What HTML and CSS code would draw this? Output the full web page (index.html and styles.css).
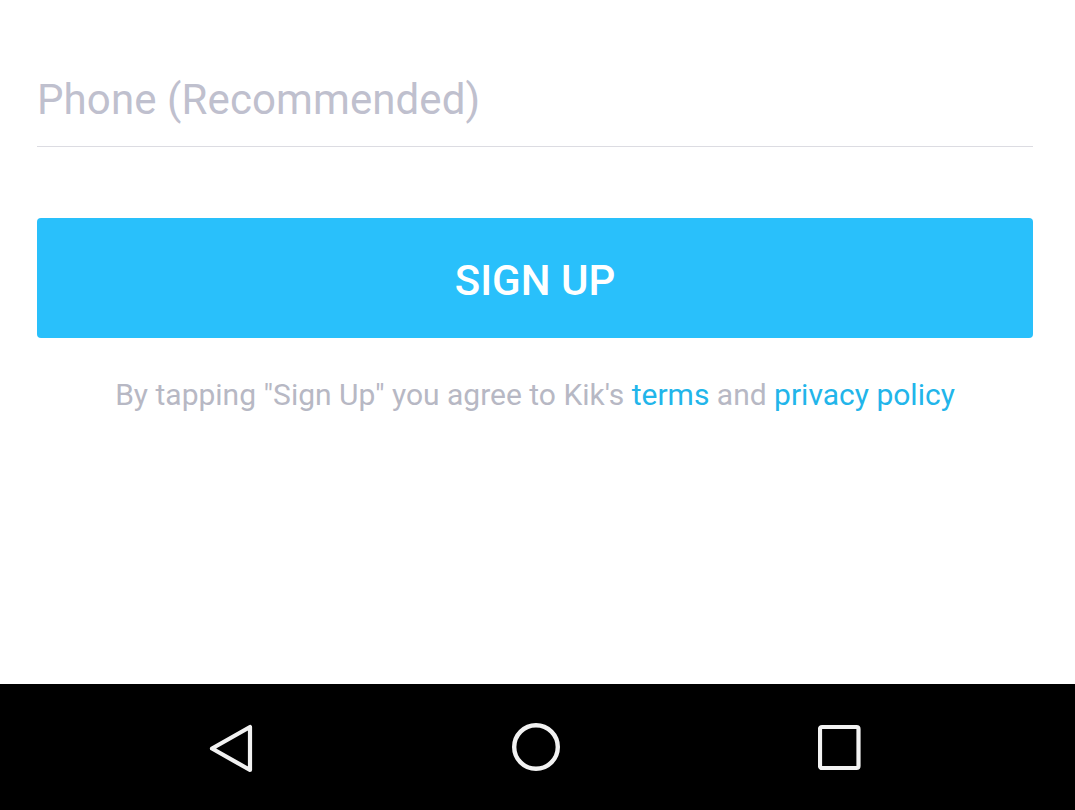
FILE: index.html
```html
<!DOCTYPE html>
<html>
<head>
<meta charset="utf-8">
<link rel="stylesheet" href="styles.css">
</head>
<body>
<div class="screen">
  <main class="content">
    <div class="field">
      <span class="placeholder">Phone (Recommended)</span>
    </div>
    <button class="signup">SIGN UP</button>
    <p class="legal">By tapping "Sign Up" you agree to Kik's <span class="link">terms</span> and <span class="link">privacy policy</span></p>
  </main>
  <nav class="navbar">
    <svg class="nav-icon" width="50" height="56" viewBox="0 0 50 56">
      <path d="M46 8 L46 51 L8 29.5 Z" fill="none" stroke="#f2f2f2" stroke-width="4.2" stroke-linejoin="round"/>
    </svg>
    <svg class="nav-icon" width="56" height="56" viewBox="0 0 56 56">
      <circle cx="28" cy="28" r="21.8" fill="none" stroke="#f2f2f2" stroke-width="4.4"/>
    </svg>
    <svg class="nav-icon" width="56" height="56" viewBox="0 0 56 56">
      <rect x="2" y="8" width="38.5" height="41" rx="2" fill="none" stroke="#f2f2f2" stroke-width="4.2"/>
    </svg>
  </nav>
</div>
</body>
</html>
```

FILE: styles.css
```css
* { box-sizing: border-box; }
html, body {
  margin: 0;
  padding: 0;
  background: #ffffff;
}
.screen {
  width: 1075px;
  height: 810px;
  display: flex;
  flex-direction: column;
  font-family: Roboto, "Noto Sans", sans-serif;
  overflow: hidden;
}
.content {
  flex: 1;
  padding: 0 42px 0 37px;
  display: flex;
  flex-direction: column;
}
.field {
  margin-top: 74px;
  height: 73px;
  border-bottom: 1.5px solid #dcdce2;
  display: flex;
  align-items: flex-start;
}
.placeholder {
  font-size: 42px;
  line-height: 52px;
  color: #bfc0ce;
  letter-spacing: 0.1px;
}
.signup {
  margin-top: 71px;
  height: 120px;
  width: 100%;
  border: none;
  border-radius: 4px;
  background: #29c0fb;
  color: #ffffff;
  font-family: Roboto, "Noto Sans", sans-serif;
  font-weight: 500;
  font-size: 42px;
  padding: 5px 0 0;
  cursor: pointer;
}
.legal {
  margin: 38px 0 0;
  text-align: center;
  font-size: 30px;
  line-height: 38px;
  color: #b7b8c4;
}
.link {
  color: #22b5ea;
}
.navbar {
  height: 126px;
  background: #000000;
  display: flex;
  align-items: center;
  gap: 254px;
  padding: 0 0 0 204px;
}
.nav-icon {
  display: block;
}
```
